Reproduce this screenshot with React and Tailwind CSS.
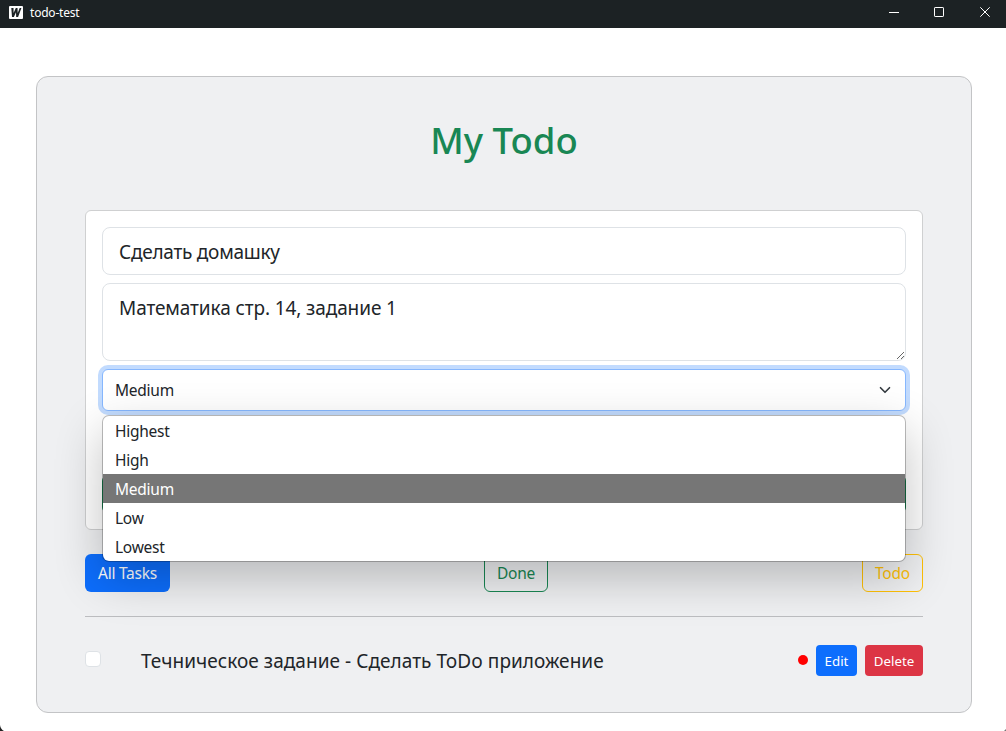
import React from "react";

const priorities = ["Highest", "High", "Medium", "Low", "Lowest"];

function TitleBar() {
  return (
    <header className="flex h-7 shrink-0 items-center justify-between bg-[#1c2224] pl-[9px] text-white">
      <div className="flex items-center gap-[7px]">
        <svg width="14" height="13" viewBox="0 0 14 13" className="-mt-[3px]">
          <rect width="14" height="13" rx="1" fill="#fff" />
          <path d="M2.3 2h2.2l.1 5L6.8 2h1.7l.2 5 2-5h1.7L9.1 11H7.2L7 6.2 4.9 11H3z" fill="#1c2224" />
        </svg>
        <span className="-mt-[2px] text-[12px] leading-4 tracking-[-0.2px]">todo-test</span>
      </div>
      <div className="-mt-[4px] flex items-center pr-4">
        <svg width="10" height="10" viewBox="0 0 10 10" className="mr-[35px]"><path d="M0 5.5h10" stroke="#fff" /></svg>
        <svg width="10" height="10" viewBox="0 0 10 10" fill="none" className="mr-9"><rect x=".5" y=".5" width="9" height="9" rx=".6" stroke="#fff" /></svg>
        <svg width="10" height="10" viewBox="0 0 10 10"><path d="M.3.3l9.4 9.4M9.7.3L.3 9.7" stroke="#fff" /></svg>
      </div>
    </header>
  );
}

function PriorityMenu() {
  return (
    <ul className="absolute -left-px top-[45px] z-10 w-[804px] overflow-hidden rounded-[7px] border border-black/25 bg-white bg-clip-padding shadow-[0_16px_48px_rgba(0,0,0,0.24)]">
      {priorities.map((p) => (
        <li
          key={p}
          className={
            p === "Medium"
              ? "h-[29px] bg-[#767676] pl-3 text-[15.5px] leading-[31px] tracking-[-0.25px] text-white"
              : "h-[29px] pl-3 text-[15.5px] leading-[31px] tracking-[-0.25px]"
          }
        >
          {p}
        </li>
      ))}
    </ul>
  );
}

export default function App() {
  return (
    <div className="relative flex h-[731px] w-[1006px] flex-col overflow-hidden bg-white font-['Noto_Sans',sans-serif] text-[#212529]">
      <TitleBar />
      <main className="ml-9 mt-12 h-[637px] w-[936px] rounded-xl border border-[#c3c4c6] bg-[#eff0f2] px-12">
        <h1 className="mt-[39px] text-center text-[36.5px] font-medium leading-[48px] text-[#198754]">My Todo</h1>

        <form className="mt-[46px] flex h-80 flex-col gap-2 rounded-md border border-[#cfd0d1] bg-white p-4">
          <div className="h-12 shrink-0 rounded-lg border border-[#dee2e6] px-4 text-[19px] leading-[48px] tracking-[-0.25px]">
            Сделать домашку
          </div>
          <div className="relative h-[78px] shrink-0 rounded-lg border border-[#dee2e6] px-4 text-[19px] leading-[48px] tracking-[-0.1px]">
            Математика стр. 14, задание 1
            <svg width="9" height="9" viewBox="0 0 9 9" className="absolute bottom-0 right-0">
              <path d="M1 8L8 1M5 8l3-3" stroke="#555" strokeWidth=".9" />
            </svg>
          </div>
          <div className="relative flex h-[42px] shrink-0 items-center justify-between rounded-md border border-[#86b7fe] bg-white pl-3 pr-[14px] text-[15.5px] tracking-[-0.25px] shadow-[0_0_0_4px_#c2dbfe]">
            <span className="pt-[2px]">Medium</span>
            <svg width="12" height="12" viewBox="0 0 16 16" fill="none">
              <path d="m2 5 6 6 6-6" stroke="#343a40" strokeWidth="2.2" strokeLinecap="round" strokeLinejoin="round" />
            </svg>
            <PriorityMenu />
          </div>
          <div className="h-12 shrink-0 rounded-lg" />
          <div className="h-[38px] shrink-0 rounded-md bg-[#198754]" />
        </form>

        <div className="mt-6 flex justify-between text-[15.5px] leading-[38px] tracking-[-0.25px]">
          <button className="h-[38px] w-[85px] rounded-md bg-[#0d6efd] text-white">All Tasks</button>
          <button className="h-[38px] w-16 rounded-md border border-[#198754] text-[#198754]"><span className="block leading-[36px]">Done</span></button>
          <button className="h-[38px] w-[61px] rounded-md border border-[#ffc107] text-[#ffc107]"><span className="block leading-[36px]">Todo</span></button>
        </div>

        <hr className="mt-6 border-[#bcbdc0]" />

        <div className="mt-7 flex h-[31px] items-center">
          <span className="-mt-1 size-4 rounded border border-[#dee2e6] bg-white" />
          <span className="ml-10 text-[19px] leading-7 tracking-[0.055px]">Течническое задание - Сделать ToDo приложение</span>
          <span className="-mt-px ml-auto size-[10px] rounded-full bg-[#ff0000]" />
          <button className="ml-2 h-[31px] w-[41px] rounded bg-[#0d6efd] pt-[2px] text-[13.3px] text-white">Edit</button>
          <button className="ml-2 h-[31px] w-[58px] rounded bg-[#dc3545] pt-[2px] text-[13.3px] text-white">Delete</button>
        </div>
      </main>
      <svg width="4" height="6" viewBox="0 0 4 6" className="absolute bottom-0 left-0"><path d="M0 0Q.5 4 4 6H0z" fill="#222" /></svg>
      <svg width="2" height="2" viewBox="0 0 2 2" className="absolute bottom-0 right-0"><path d="M2 0v2H0z" fill="#777" /></svg>
    </div>
  );
}
